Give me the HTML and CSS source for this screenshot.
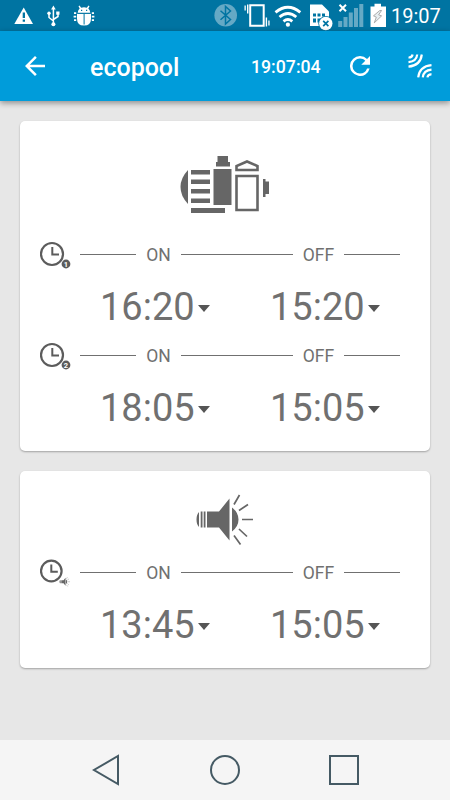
FILE: index.html
```html
<!DOCTYPE html>
<html lang="en">
<head>
    <meta charset="UTF-8">
    <meta name="viewport" content="width=device-width, initial-scale=1.0">
    <title>ecopool</title>
    <link rel="stylesheet" href="styles.css">
</head>
<body>
    <!-- Status bar -->
    <div class="status-bar">
        <svg width="450" height="31" viewBox="0 0 450 31" fill="#fff">
            <!-- warning -->
            <path d="M23.700 7.500L33 24H14.300z"/>
            <path d="M22.700 12.500h2.300v5.500h-2.300zM22.700 19.500h2.300v2.200h-2.300z" fill="#0074a2"/>
            <!-- usb -->
            <g fill="none" stroke="#fff" stroke-width="1.500">
                <path d="M53.400 8v16M49 14v3.500l4.400 3.500M58 13v3.500l-4.600 3"/>
            </g>
            <path d="M53.400 5.500l2.300 4h-4.600z"/>
            <path d="M56.200 11.500h3.300v3.200h-3.300z"/>
            <circle cx="49" cy="13.200" r="1.700"/>
            <circle cx="53.400" cy="24.300" r="2"/>
            <!-- debug bug -->
            <path d="M79.500 5.500l1.700 2.300q2.800-1 5.600 0l1.700-2.300 1 .8-1.200 2.300q1.700 1.600 2 4.200H77.700q.3-2.600 2-4.200l-1.200-2.300z"/>
            <path d="M77 13.700h14v5q0 6.800-7 6.800t-7-6.800z"/>
            <path d="M74 12.300h2.200v1.800H74zM73.600 15.800h2.600v1.800h-2.600zM74 19.300h2.200v1.800H74zM91.800 12.300H94v1.800h-2.200zM91.800 15.800h2.600v1.800h-2.600zM91.800 19.300H94v1.800h-2.200z"/>
            <path d="M83.600 14h1v10.500h-1zM77.500 13.200h13v.7h-13zM81 9.800h1.200v1.200H81zM86 9.800h1.200v1.200H86z" fill="#0074a2"/>
            <!-- bluetooth -->
            <circle cx="225.700" cy="15.300" r="11.300" fill="#65a9c5"/>
            <path d="M220.500 10.800l10 8.700-5 4.500V6.500l5 4.500-10 8.800" fill="none" stroke="#0074a2" stroke-width="1.500"/>
            <!-- vibrate -->
            <path d="M250.200 5.300h13.500v20.500h-13.500z" fill="none" stroke="#fff" stroke-width="2"/>
            <path d="M244.500 5.500h1.300v5h-1.300zM247 4.500h1.400v9H247zM265.700 17.500h1.400v9h-1.400zM268.300 20.500h1.300v5h-1.300z"/>
            <!-- wifi -->
            <g fill="none" stroke="#fff" stroke-width="2.800">
                <path d="M275.500 12.300q12.400-10.200 24.800 0M279.500 17q8.400-7 16.800 0M283.500 21.300q4.400-3.500 8.800 0"/>
            </g>
            <circle cx="287.900" cy="24.700" r="2.100"/>
            <!-- sim -->
            <path d="M310 4.500h12l7 7V26h-19z"/>
            <path d="M313 13.500h3v3h-3zM317.500 13.500h3v3h-3zM322 13.500h3v3h-3zM313 18.500h3v4h-3zM317.500 18.500h3v4h-3z" fill="#0074a2"/>
            <circle cx="325.800" cy="23.500" r="7.500" fill="#0074a2"/>
            <circle cx="325.800" cy="23.500" r="6.700"/>
            <path d="M323.200 20.900l5.200 5.200M328.400 20.900l-5.200 5.200" stroke="#0074a2" stroke-width="1.700"/>
            <!-- signal -->
            <path d="M338.200 21h4v6h-4zM343.500 17h4v10h-4zM348.800 12.500h4V27h-4zM354 8h4v19h-4zM359.300 4h4v23h-4z" fill="#65a9c5"/>
            <path d="M339.500 4.700l6.500 6.500M346 4.700l-6.500 6.500" stroke="#fff" stroke-width="2"/>
            <!-- battery -->
            <path d="M374.500 3.800h6.500v2.700h5V27h-15.500V6.500h4z"/>
            <path d="M379.800 10.500l-6.300 5.300 2.800 1.300-2 5.700 7.300-6.900-3-1.100 3-4.300z" fill="#e7eef1" stroke="#999" stroke-width=".8"/>
        </svg>
        <span class="status-time">19:07</span>
    </div>

    <!-- App bar -->
    <header class="app-bar">
        <svg class="back" width="20" height="20" viewBox="4 4 16 16" fill="#fff">
            <path d="M20 11H7.830l5.590-5.590L12 4l-8 8 8 8 1.410-1.410L7.830 13H20v-2z"/>
        </svg>
        <h1>ecopool</h1>
        <span class="clock">19:07:04</span>
        <svg class="refresh" width="20" height="20" viewBox="4 4 16 16" fill="#fff">
            <path d="M17.650 6.350A7.958 7.958 0 0 0 12 4a8 8 0 1 0 7.730 10h-2.080A5.990 5.990 0 0 1 12 18a6 6 0 1 1 0-12c1.660 0 3.140.690 4.220 1.780L13 11h7V4l-2.350 2.350z"/>
        </svg>
        <svg class="link" width="24" height="24" viewBox="0 0 24 24" fill="none" stroke="#fff" stroke-width="2.200">
            <path d="M.5 3.500Q4 3.700 4.600.5M.5 8.200Q8.500 7.500 9.200.5M.5 12.700Q12.500 11.500 13.800.5"/>
            <path d="M23.500 20.400Q20 20.200 19.400 23.400M23.500 15.700Q15.500 16.400 14.800 23.400M23.500 11.200Q11.500 12.400 10.200 23.400"/>
        </svg>
    </header>

    <main>
        <!-- Pump -->
        <section class="card">
            <div class="device">
                <svg width="90" height="60" viewBox="0 0 90 60" fill="#666">
                    <path d="M8 15v34Q.5 41 .5 32T8 15z"/>
                    <path d="M11 15h19v4.500H11zM11 24.500h19V29H11zM11 34h19v4.500H11zM11 43.500h19V48H11zM11 53h34v5H11z"/>
                    <path d="M37.500 1H48v6h2v4.500H36V7h1.500zM33.500 14h18v36h-18z"/>
                    <path d="M56.500 15v-4L67 6.500 77.500 11v4z" fill="none" stroke="#666" stroke-width="2.600"/>
                    <path d="M56.500 21h21v34h-21z" fill="none" stroke="#666" stroke-width="2.600"/>
                    <path d="M83 24h2.500v2.500H89V39h-3.500v3H83z"/>
                </svg>
            </div>
            <div class="timer">
                <svg class="timer-icon" width="32" height="32" viewBox="0 0 32 32">
                    <g fill="none" stroke="#5c5c5c">
                        <circle cx="12" cy="14" r="11" stroke-width="2.200"/>
                        <path d="M12.300 7v7.500H19" stroke-width="2"/>
                    </g>
                    <circle cx="26" cy="24" r="4.400" fill="#5c5c5c"/>
                    <text class="badge" x="26" y="26.700">1</text>
                </svg>
                <span class="line short"></span>
                <span class="on">ON</span>
                <span class="line"></span>
                <span class="off">OFF</span>
                <span class="line short"></span>
            </div>
            <div class="times">
                <span class="time">16:20</span>
                <span class="time">15:20</span>
            </div>
            <div class="timer">
                <svg class="timer-icon" width="32" height="32" viewBox="0 0 32 32">
                    <g fill="none" stroke="#5c5c5c">
                        <circle cx="12" cy="14" r="11" stroke-width="2.200"/>
                        <path d="M12.300 7v7.500H19" stroke-width="2"/>
                    </g>
                    <circle cx="26" cy="24" r="4.400" fill="#5c5c5c"/>
                    <text class="badge" x="26" y="26.700">2</text>
                </svg>
                <span class="line short"></span>
                <span class="on">ON</span>
                <span class="line"></span>
                <span class="off">OFF</span>
                <span class="line short"></span>
            </div>
            <div class="times">
                <span class="time">18:05</span>
                <span class="time">15:05</span>
            </div>
        </section>

        <!-- Light -->
        <section class="card light">
            <div class="device">
                <svg width="60" height="54" viewBox="0 0 60 54">
                    <g id="lamp">
                        <path d="M4 20v15q-2.500-2.500-2.500-7.500T4 20zM5.700 19.500h1.800v16H5.700zM8.700 19.500h1.800v16H8.700zM12 19.500h12L34.500 6.500v42L24 35.500H12zM37 15.500q6.500 5 6.500 12T37 39.500z" fill="#666"/>
                        <path d="M39 12.500l5.500-9.500M44 18.500l9-6M47 27.500H58M44 37l8 7.500M39 43.500l6.500 9" fill="none" stroke="#666" stroke-width="1.700"/>
                    </g>
                </svg>
            </div>
            <div class="timer">
                <svg class="timer-icon" width="32" height="32" viewBox="0 0 32 32">
                    <g fill="none" stroke="#5c5c5c">
                        <circle cx="11.300" cy="13" r="10.300" stroke-width="2.200"/>
                        <path d="M11.300 6.500v7.300h6.500" stroke-width="2"/>
                    </g>
                    <use href="#lamp" transform="translate(19 18.500) scale(.19)"/>
                </svg>
                <span class="line short"></span>
                <span class="on">ON</span>
                <span class="line"></span>
                <span class="off">OFF</span>
                <span class="line short"></span>
            </div>
            <div class="times">
                <span class="time">13:45</span>
                <span class="time">15:05</span>
            </div>
        </section>
    </main>

    <!-- Navigation bar -->
    <nav class="nav-bar">
        <svg width="30" height="32" viewBox="0 0 30 32"><path d="M27 2v28L3 16z"/></svg>
        <svg width="32" height="32" viewBox="0 0 32 32"><circle cx="16" cy="16" r="14"/></svg>
        <svg width="32" height="32" viewBox="0 0 32 32"><path d="M2 2h28v28H2z"/></svg>
    </nav>
</body>
</html>
```
FILE: styles.css
```css
* {
    box-sizing: border-box;
}

body {
    margin: 0;
    height: 800px;
    display: flex;
    flex-direction: column;
    overflow: hidden;
    font-family: Roboto, sans-serif;
    background: #e7e7e7;
    color: #707070;
}

svg {
    display: block;
    flex: none;
}

/* Status bar */
.status-bar {
    height: 31px;
    display: flex;
    flex: none;
    background: #0074a2;
}

.status-time {
    margin-left: -59px;
    font-size: 20px;
    line-height: 33px;
    color: #fff;
}

/* App bar */
.app-bar {
    height: 70px;
    flex: none;
    display: flex;
    align-items: center;
    padding: 0 18px 0 25px;
    background: #009cda;
    color: #fff;
    box-shadow: 0 2px 6px rgba(0, 0, 0, 0.4);
}

.app-bar h1 {
    width: 161px;
    margin: 3px 0 0 45px;
    font-size: 25px;
    font-weight: 500;
    line-height: 30px;
}

.clock {
    width: 99px;
    font-size: 17.7px;
    font-weight: 500;
    line-height: 22px;
    padding-top: 1px;
}

.link {
    margin-left: auto;
}

/* Cards */
main {
    flex: 1;
    display: flex;
    flex-direction: column;
    gap: 20px;
    padding: 20px;
}

.card {
    height: 330px;
    padding: 34px 20px 0;
    border-radius: 5px;
    background: #fff;
    box-shadow: 0 1px 2px rgba(0, 0, 0, 0.3);
}

.card.light {
    height: 197px;
    padding-top: 21px;
}

.device {
    height: 73px;
    display: flex;
    justify-content: center;
}

.light .device {
    height: 54px;
}

.timer {
    height: 54px;
    display: flex;
    align-items: center;
    padding-right: 10px;
    font-size: 17.5px;
    line-height: 20px;
}

.timer-icon {
    margin: 1px 8px 0 0;
}

.on,
.off {
    width: 45px;
    text-align: center;
}

.off {
    width: 51px;
}

.line {
    flex: 1;
    height: 1px;
    margin-bottom: 2px;
    background: #707070;
}

.line.short {
    flex: 0 0 56px;
}

.badge {
    font-size: 7.5px;
    font-weight: 700;
    text-anchor: middle;
    fill: #fff;
}

.times {
    height: 47px;
    display: flex;
    padding: 2px 0 0 60px;
}

.time {
    flex: 0 0 170px;
    display: flex;
    align-items: center;
    font-size: 38px;
    line-height: 46px;
}

/* Dropdown arrow */
.time::after {
    content: "";
    margin: 3px 0 0 3px;
    border: 6px solid transparent;
    border-top: 7px solid #555;
    border-bottom: 0;
}

/* Navigation bar */
.nav-bar {
    height: 60px;
    flex: none;
    display: flex;
    align-items: center;
    justify-content: space-between;
    padding: 0 90px 0 91px;
    background: #f5f5f5;
}

.nav-bar svg {
    fill: none;
    stroke: #455a64;
    stroke-width: 2;
}
```
